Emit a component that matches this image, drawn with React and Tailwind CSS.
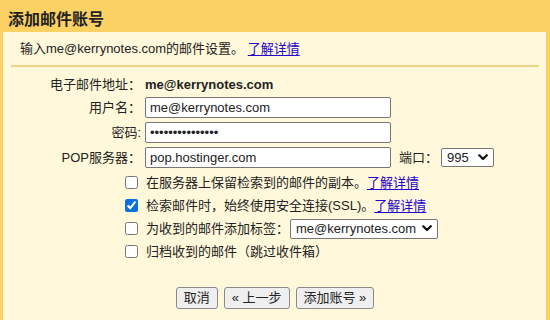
import React from "react";

const font = { fontFamily: '"Liberation Sans", Arial, "Noto Sans CJK SC", sans-serif' };

function Chevron() {
  return (
    <svg width="10" height="7" viewBox="0 0 10 7" className="shrink-0">
      <polyline points="1.2,1.2 5,5 8.8,1.2" fill="none" stroke="#111" strokeWidth="2.2" strokeLinecap="round" strokeLinejoin="round" />
    </svg>
  );
}

function FakeSelect({ value, className }) {
  return (
    <div className={"flex items-center justify-between bg-white border border-[#767676] rounded-[2px] pl-[5px] pr-[5px] text-[13px] text-[#222] " + className}>
      <span className="leading-none">{value}</span>
      <Chevron />
    </div>
  );
}

function Link({ children }) {
  return <a href="#" className="text-[#2200cc] underline underline-offset-[2px]">{children}</a>;
}

export default function App() {
  return (
    <div className="w-[550px] h-[320px] overflow-hidden flex flex-col text-[#222] bg-[#fbd163]" style={font}>
      <div className="h-[32px] shrink-0 pl-[8px] pt-[10px] text-[16px] leading-[19px] font-bold text-[#222]">添加邮件账号</div>
      <div className="flex-1 ml-[3px] mr-[4px] bg-[#fff8da] flex flex-col">
        <div className="pt-[8px] pb-[8px] pl-[17px] text-[13px] leading-[17px]">
          输入me@kerrynotes.com的邮件设置。 <Link>了解详情</Link>
        </div>
        <div className="ml-[8px] mr-[7px] h-[2px] bg-[#ecd489]" />
        <div className="pt-[9px] flex flex-col text-[13px]">
          <div className="h-[18px] flex items-center">
            <div className="w-[138px] text-right">电子邮件地址：</div>
            <div className="ml-[4px] font-bold">me@kerrynotes.com</div>
          </div>
          <div className="h-[21px] mt-[3px] flex items-center">
            <div className="w-[138px] text-right">用户名：</div>
            <input readOnly value="me@kerrynotes.com" className="ml-[4px] w-[246px] h-[21px] bg-white border border-[#767676] rounded-[2px] px-[4px] text-[13px] outline-none" />
          </div>
          <div className="h-[21px] mt-[4px] flex items-center">
            <div className="w-[138px] text-right">密码:</div>
            <input readOnly type="password" value="abcdefghijklmno" className="ml-[4px] w-[246px] h-[21px] bg-white border border-[#767676] rounded-[2px] px-[4px] text-[13px] outline-none" />
          </div>
          <div className="h-[21px] mt-[4px] flex items-center">
            <div className="w-[138px] text-right">POP服务器：</div>
            <input readOnly value="pop.hostinger.com" className="ml-[4px] w-[246px] h-[21px] bg-white border border-[#767676] rounded-[2px] px-[4px] text-[13px] outline-none" />
            <div className="ml-[8px]">端口：</div>
            <FakeSelect value="995" className="ml-[3px] w-[53px] h-[19px]" />
          </div>
          <div className="mt-[4px] flex flex-col gap-[2px]">
            <div className="h-[21px] flex items-center pl-[122px]">
              <input type="checkbox" className="w-[13px] h-[13px] m-0" />
              <span className="ml-[8px]">在服务器上保留检索到的邮件的副本。<Link>了解详情</Link></span>
            </div>
            <div className="h-[21px] flex items-center pl-[122px]">
              <input type="checkbox" defaultChecked className="w-[13px] h-[13px] m-0 accent-[#0b6fe0]" />
              <span className="ml-[8px]">检索邮件时，始终使用安全连接(SSL)。<Link>了解详情</Link></span>
            </div>
            <div className="h-[21px] flex items-center pl-[122px]">
              <input type="checkbox" className="w-[13px] h-[13px] m-0" />
              <span className="ml-[8px]">为收到的邮件添加标签：</span>
              <FakeSelect value="me@kerrynotes.com" className="ml-[1px] w-[148px] h-[20px]" />
            </div>
            <div className="h-[21px] flex items-center pl-[122px]">
              <input type="checkbox" className="w-[13px] h-[13px] m-0" />
              <span className="ml-[8px]">归档收到的邮件（跳过收件箱）</span>
            </div>
          </div>
          <div className="mt-[25px] flex justify-center gap-[6px] pl-[1px]">
            <button className="h-[22px] px-[7px] bg-[#efefef] border border-[#8a8a8a] rounded-[3px] text-[13px]">取消</button>
            <button className="h-[22px] px-[7px] bg-[#efefef] border border-[#8a8a8a] rounded-[3px] text-[13px]">« 上一步</button>
            <button className="h-[22px] px-[7px] bg-[#efefef] border border-[#8a8a8a] rounded-[3px] text-[13px]">添加账号 »</button>
          </div>
        </div>
      </div>
    </div>
  );
}
